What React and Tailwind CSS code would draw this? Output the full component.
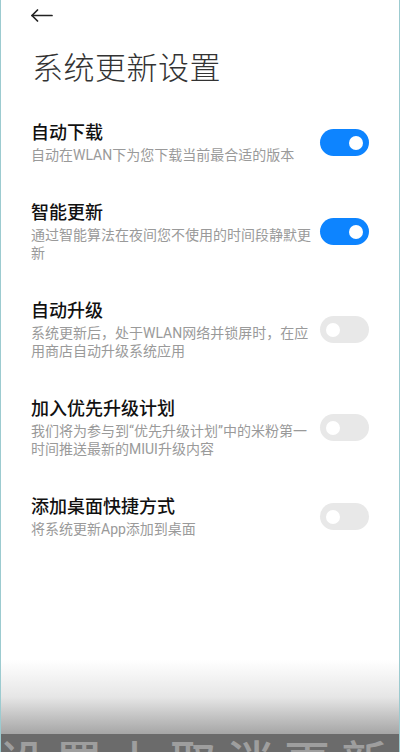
import React from 'react';

const items = [
  { title: '自动下载', desc: '自动在WLAN下为您下载当前最合适的版本', on: true },
  { title: '智能更新', desc: '通过智能算法在夜间您不使用的时间段静默更新', on: true },
  { title: '自动升级', desc: '系统更新后，处于WLAN网络并锁屏时，在应用商店自动升级系统应用', on: false },
  { title: '加入优先升级计划', desc: '我们将为参与到“优先升级计划”中的米粉第一时间推送最新的MIUI升级内容', on: false },
  { title: '添加桌面快捷方式', desc: '将系统更新App添加到桌面', on: false },
];

const Toggle = ({ on }) => (
  <div
    className={`w-[49px] h-[27px] shrink-0 rounded-full flex items-center px-[6px] ${
      on ? 'bg-[#0d84ff] justify-end' : 'bg-[#e8e8e8] justify-start'
    }`}
  >
    <div className="w-[14px] h-[14px] rounded-full bg-white" />
  </div>
);

const App = () => {
  return (
    <div
      className="relative h-[752px] w-full overflow-hidden bg-white border-x border-[#9ccbd0]"
      style={{ fontFamily: 'Roboto, "Noto Sans CJK SC", sans-serif' }}
    >
      <div className="h-[30px] flex items-center pl-[30px]">
        <svg width="22" height="13" viewBox="0 0 22 13" fill="none" stroke="#222" strokeWidth="1.7" strokeLinecap="round" strokeLinejoin="round">
          <path d="M1 6.5H21" />
          <path d="M6.5 1L1 6.5L6.5 12" />
        </svg>
      </div>

      <h1 className="mt-[19px] pl-[31px] text-[31px] leading-[40px] font-light text-[#333] tracking-[0.5px]">
        系统更新设置
      </h1>

      <div className="mt-[14px]">
        {items.map((item) => (
          <div key={item.title} className="flex items-center pl-[30px] pr-[30px] pt-[18px] pb-[19px]">
            <div className="flex-1 min-w-0 pr-[6px]">
              <div className="text-[18px] leading-[24px] font-medium text-[#111]">{item.title}</div>
              <div className="mt-[1px] text-[14px] leading-[18px] text-[#9a9a9a]">{item.desc}</div>
            </div>
            <Toggle on={item.on} />
          </div>
        ))}
      </div>

      <div className="absolute left-0 right-0 bottom-0 h-[92px] flex flex-col">
        <div className="h-[74px] bg-gradient-to-b from-white/0 via-[#e6e6e6] to-[#a6a6a6]" />
        <div className="h-[18px] bg-[#6b6b6b] overflow-hidden">
          <div className="mt-[6px] ml-[-2px] text-[46px] leading-none tracking-[11px] text-[#9e9e9e] whitespace-nowrap font-medium">
            设置上取消更新
          </div>
        </div>
      </div>
    </div>
  );
};

export default App;
